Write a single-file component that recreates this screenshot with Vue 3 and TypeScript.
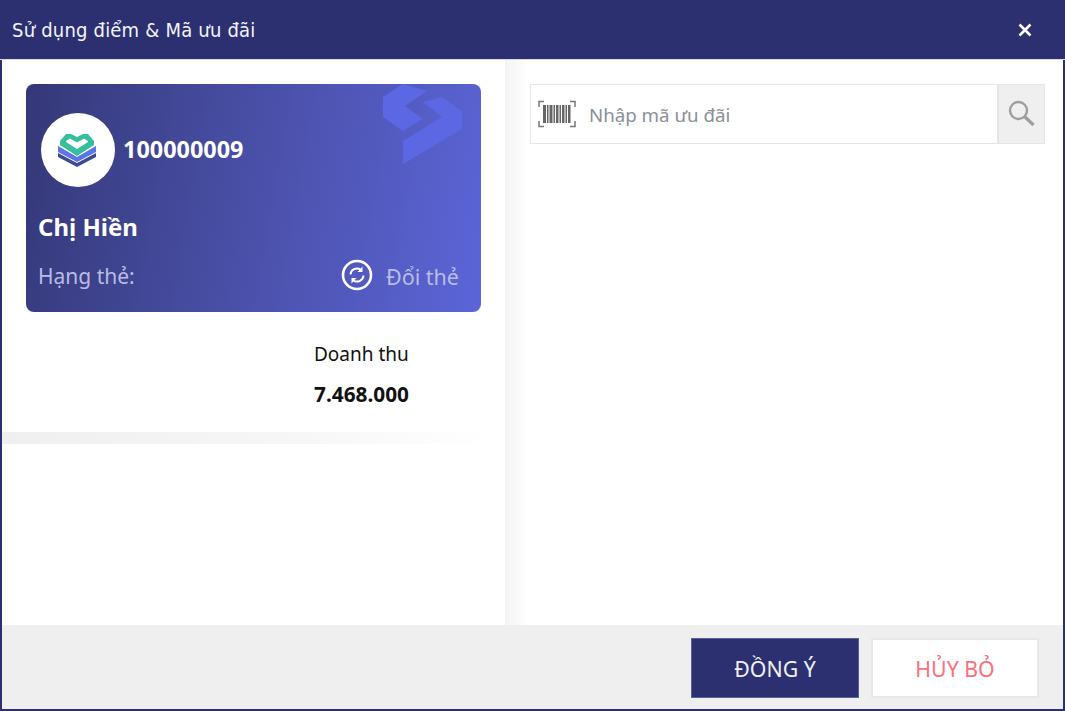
<template>
  <div class="dialog">
    <header class="title-bar">
      <span class="title">Sử dụng điểm &amp; Mã ưu đãi</span>
      <button class="close" aria-label="Đóng">
        <svg width="16" height="16" viewBox="0 0 16 16">
          <path d="M2.5 2.5 13.5 13.5M13.5 2.5 2.5 13.5" stroke="#fff" stroke-width="2.6" fill="none" />
        </svg>
      </button>
    </header>

    <main class="body">
      <section class="left">
        <div class="card">
          <svg class="watermark" width="80" height="82" viewBox="0 0 80 82">
            <path d="M0 13 20 0 44 7 22 22 40 35 20 47 0 33Z" fill="#5c67e4" />
            <path d="M40 18 59 13 79 27V45L20 80V57L59 33Z" fill="#5c67e4" />
          </svg>
          <div class="card-top">
            <div class="avatar">
              <svg class="logo" width="38" height="34" viewBox="0 0 38 34">
                <path d="M0 20V24L19 34 38 24V20L19 30Z" fill="#3c4c94" />
                <path d="M0 13V19L19 29 38 19V13L19 24Z" fill="#5b74e8" />
                <path d="M2 8 8 1H13L19 4 25 1H30L36 8V12L19 23 2 12Z" fill="#35bf9f" />
                <path d="M8 8 12 5.500 19 9.500 26 5.500 30 8V9L19 16 8 9Z" fill="#fff" />
              </svg>
            </div>
            <span class="card-no">{{ cardNo }}</span>
          </div>
          <div class="name">{{ customer }}</div>
          <div class="card-bottom">
            <span class="rank">Hạng thẻ:</span>
            <span class="swap">
              <svg width="32" height="32" viewBox="0 0 32 32" fill="none" stroke="#fff">
                <circle cx="16" cy="16" r="14" stroke-width="2.6" />
                <path d="M9.500 15.500A6.500 6.500 0 0 1 19.500 10.500M22.500 16.500A6.500 6.500 0 0 1 12.500 21.500" stroke-width="2" />
                <path d="M21.500 7.500V13H16.500ZM10.500 24.500V19H15.500Z" fill="#fff" stroke="none" />
              </svg>
              <span class="swap-text">Đổi thẻ</span>
            </span>
          </div>
        </div>
        <div class="revenue">
          <div class="rev-label">Doanh thu</div>
          <div class="rev-value">{{ revenue }}</div>
        </div>
        <div class="separator"></div>
      </section>

      <section class="right">
        <div class="search">
          <div class="search-input">
            <svg width="38" height="28" viewBox="0 0 38 28" fill="none">
              <path d="M1 7V1.500H6M32 1.500H37V7M1 21V26.500H6M32 26.500H37V21" stroke="#777" stroke-width="1.500" />
              <g fill="#666">
                <rect v-for="bar in bars" :key="bar.x" :x="bar.x" y="5" :width="bar.w" height="18" />
              </g>
            </svg>
            <span class="placeholder">Nhập mã ưu đãi</span>
          </div>
          <button class="search-btn" aria-label="Tìm kiếm">
            <svg width="28" height="28" viewBox="0 0 28 28" fill="none" stroke="#9e9e9e">
              <circle cx="10.500" cy="10.500" r="8.500" stroke-width="2.400" />
              <path d="M16.500 16.500 25.500 25" stroke-width="3.200" />
            </svg>
          </button>
        </div>
      </section>
    </main>

    <footer class="actions">
      <button class="btn primary">ĐỒNG Ý</button>
      <button class="btn cancel">HỦY BỎ</button>
    </footer>
  </div>
</template>

<script setup lang="ts">
interface Bar {
  x: number
  w: number
}

const cardNo = '100000009'
const customer = 'Chị Hiền'
const revenue = '7.468.000'

const bars: Bar[] = [
  { x: 5, w: 3 },
  { x: 9, w: 1.5 },
  { x: 11.500, w: 3 },
  { x: 15.500, w: 1.5 },
  { x: 18, w: 2.500 },
  { x: 21.500, w: 1.500 },
  { x: 24, w: 2.500 },
  { x: 27.500, w: 1.500 },
  { x: 30, w: 2.500 },
]
</script>

<style>
body {
  margin: 0;
  background: #fff;
}
</style>

<style scoped>
.dialog {
  box-sizing: border-box;
  height: 711px;
  display: flex;
  flex-direction: column;
  border: solid #2c3070;
  border-width: 0 2px 2px 2px;
  background: #fff;
  font-family: "Noto Sans", "Open Sans", sans-serif;
}

.title-bar {
  height: 60px;
  flex-shrink: 0;
  margin: 0 -2px;
  padding: 0 30px 0 12px;
  display: flex;
  align-items: center;
  justify-content: space-between;
  background: #2c3070;
  color: #f2f4fb;
  border-bottom: 1px solid #d9dae8;
  box-sizing: border-box;
}

.title {
  font-family: "DejaVu Sans", sans-serif;
  font-size: 20px;
  font-stretch: condensed;
  letter-spacing: 0.2px;
}

.close {
  width: 20px;
  height: 20px;
  padding: 0;
  display: flex;
  align-items: center;
  justify-content: center;
  background: none;
  border: none;
}

.body {
  flex: 1;
  display: flex;
  min-height: 0;
}

.left {
  width: 503px;
  flex-shrink: 0;
  padding-top: 24px;
  box-sizing: border-box;
}

.card {
  position: relative;
  overflow: hidden;
  box-sizing: border-box;
  height: 228px;
  margin: 0 24px;
  padding: 29px 22px 0 12px;
  border-radius: 8px;
  background: linear-gradient(100deg, #343878 0%, #4a50a8 50%, #5c65d8 100%);
  color: #fff;
}

.watermark {
  position: absolute;
  top: 0;
  right: 18px;
}

.card-top {
  display: flex;
  align-items: center;
  gap: 8px;
  padding-left: 3px;
}

.avatar {
  width: 74px;
  height: 74px;
  flex-shrink: 0;
  border-radius: 50%;
  background: #fff;
  display: flex;
  align-items: center;
  justify-content: center;
}

.logo {
  margin-right: 2px;
}

.card-no {
  font-size: 23.400px;
  font-weight: 700;
  margin-bottom: 2px;
}

.name {
  margin-top: 23px;
  font-size: 24px;
  line-height: 33px;
  font-weight: 700;
}

.card-bottom {
  margin-top: 16px;
  display: flex;
  align-items: center;
  justify-content: space-between;
  color: #b8bce6;
  font-size: 21px;
}

.rank {
  margin-top: 2px;
}

.swap {
  display: flex;
  align-items: center;
  gap: 13px;
}

.swap-text {
  margin-top: 2px;
  font-size: 21.500px;
}

.revenue {
  margin: 28px 0 0 312px;
  width: 96px;
  color: #111;
  height: 92px;
}

.rev-label {
  font-size: 19px;
  line-height: 28px;
  white-space: nowrap;
}

.rev-value {
  margin-top: 12px;
  font-size: 20.800px;
  line-height: 28px;
  font-weight: 700;
  white-space: nowrap;
}

.separator {
  height: 12px;
  background: linear-gradient(90deg, #efefef 0%, #f7f7f7 60%, #ffffff 98%);
}

.right {
  flex: 1;
  padding: 24px 18px 0 24px;
  border-left: 1px solid #f2f2f2;
  background: linear-gradient(90deg, #f5f5f5 0, #ffffff 24px);
}

.search {
  height: 60px;
  display: flex;
  box-sizing: border-box;
  border: 1.500px solid #e6e6e6;
  background: #fff;
}

.search-input {
  flex: 1;
  display: flex;
  align-items: center;
  gap: 13px;
  padding-left: 7px;
}

.placeholder {
  color: #8b8f99;
  font-size: 18.700px;
  margin-top: 1px;
}

.search-btn {
  width: 47px;
  padding: 0;
  display: flex;
  align-items: center;
  justify-content: center;
  background: #efefef;
  border: none;
  border-left: 2px solid #e4e4e4;
}

.actions {
  height: 84px;
  flex-shrink: 0;
  padding: 13px 24px 0 0;
  box-sizing: border-box;
  display: flex;
  justify-content: flex-end;
  gap: 12px;
  background: #efefef;
}

.btn {
  width: 168px;
  height: 60px;
  font-family: "Noto Sans", "Open Sans", sans-serif;
  font-size: 21.300px;
  box-sizing: border-box;
}

.primary {
  background: #2c3070;
  border: 1px solid #5a5f97;
  color: #eef0fa;
}

.cancel {
  background: #fff;
  border: 2px solid #e8e8e8;
  color: #fb6f7c;
}
</style>
